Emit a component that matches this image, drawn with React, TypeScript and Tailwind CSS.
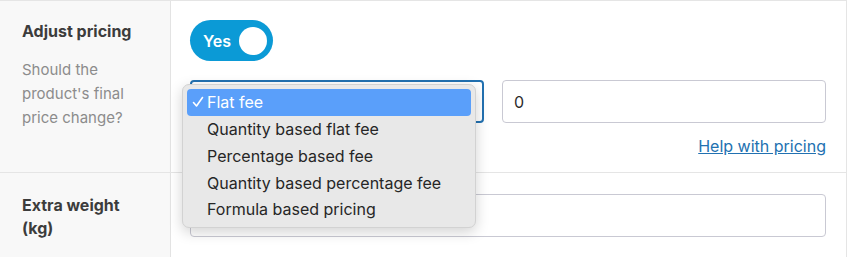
import React from "react";

const font = { fontFamily: 'Inter, "Liberation Sans", sans-serif' };

export default function App() {
  const options = [
    "Flat fee",
    "Quantity based flat fee",
    "Percentage based fee",
    "Quantity based percentage fee",
    "Formula based pricing",
  ];
  return (
    <div className="w-[848px] h-[257px] bg-white overflow-hidden" style={font}>
      <div className="w-[847px] border-t border-r border-[#e5e5e5]">
        {/* Row 1 */}
        <div className="flex border-b border-[#e5e5e5] h-[172px]">
          <div className="w-[171px] shrink-0 bg-[#f8f8f8] border-r border-[#e3e3e3] pl-[22px] pt-[19px] pr-[20px]">
            <div className="text-[16px] font-bold text-[#3c3c3c] leading-[22px]">Adjust pricing</div>
            <div className="mt-[16px] text-[15px] text-[#8c8c8c] leading-[24px]">
              Should the product's final price change?
            </div>
          </div>
          <div className="flex-1 pl-[19px] pr-[20px] pt-[19px] relative z-10">
            <div className="w-[83px] h-[41px] rounded-full bg-[#0b9ad6] flex items-center justify-between pl-[13px] pr-[6px]">
              <span className="text-white text-[16px] font-semibold">Yes</span>
              <span className="w-[28px] h-[28px] rounded-full bg-white" />
            </div>
            <div className="flex gap-[18px] mt-[19px]">
              <div className="relative w-[294px] shrink-0">
                <div className="h-[43px] rounded-[4px] border-2 border-[#2271b1] bg-white" />
                <div className="absolute left-[-8px] top-[4px] w-[294px] rounded-[7px] bg-[#e8e8e8] border border-[#d2d2d2] shadow-[0_4px_14px_rgba(0,0,0,0.18)] p-[4px] z-20">
                  {options.map((o, i) => (
                    <div
                      key={o}
                      className={
                        i === 0
                          ? "h-[26.75px] rounded-[4px] bg-[#5a9ffa] text-white flex items-center text-[16px]"
                          : "h-[26.75px] rounded-[4px] text-[#262626] flex items-center text-[16px]"
                      }
                    >
                      <span className="w-[20px] flex justify-center pl-[2px]">
                        {i === 0 && (
                          <svg width="12" height="12" viewBox="0 0 12 12" fill="none">
                            <path d="M1.5 6.5 L4.5 10 L10.5 1.5" stroke="white" strokeWidth="1.6" strokeLinecap="round" strokeLinejoin="round" />
                          </svg>
                        )}
                      </span>
                      <span>{o}</span>
                    </div>
                  ))}
                </div>
              </div>
              <div className="flex-1 h-[43px] rounded-[4px] border border-[#c9c9d3] flex items-center pl-[11px] text-[16px] text-[#2c2c2c]">
                0
              </div>
            </div>
            <div className="flex justify-end mt-[11px]">
              <a className="text-[16px] text-[#2271b1] underline">Help with pricing</a>
            </div>
          </div>
        </div>
        {/* Row 2 */}
        <div className="flex h-[90px]">
          <div className="w-[171px] shrink-0 bg-[#f8f8f8] border-r border-[#e3e3e3] pl-[22px] pt-[21px] pr-[20px]">
            <div className="text-[16px] font-bold text-[#3c3c3c] leading-[23px]">
              Extra weight (kg)
            </div>
          </div>
          <div className="flex-1 pl-[19px] pr-[20px] pt-[21px]">
            <div className="h-[43px] rounded-[4px] border border-[#c9c9d3]" />
          </div>
        </div>
      </div>
    </div>
  );
}
